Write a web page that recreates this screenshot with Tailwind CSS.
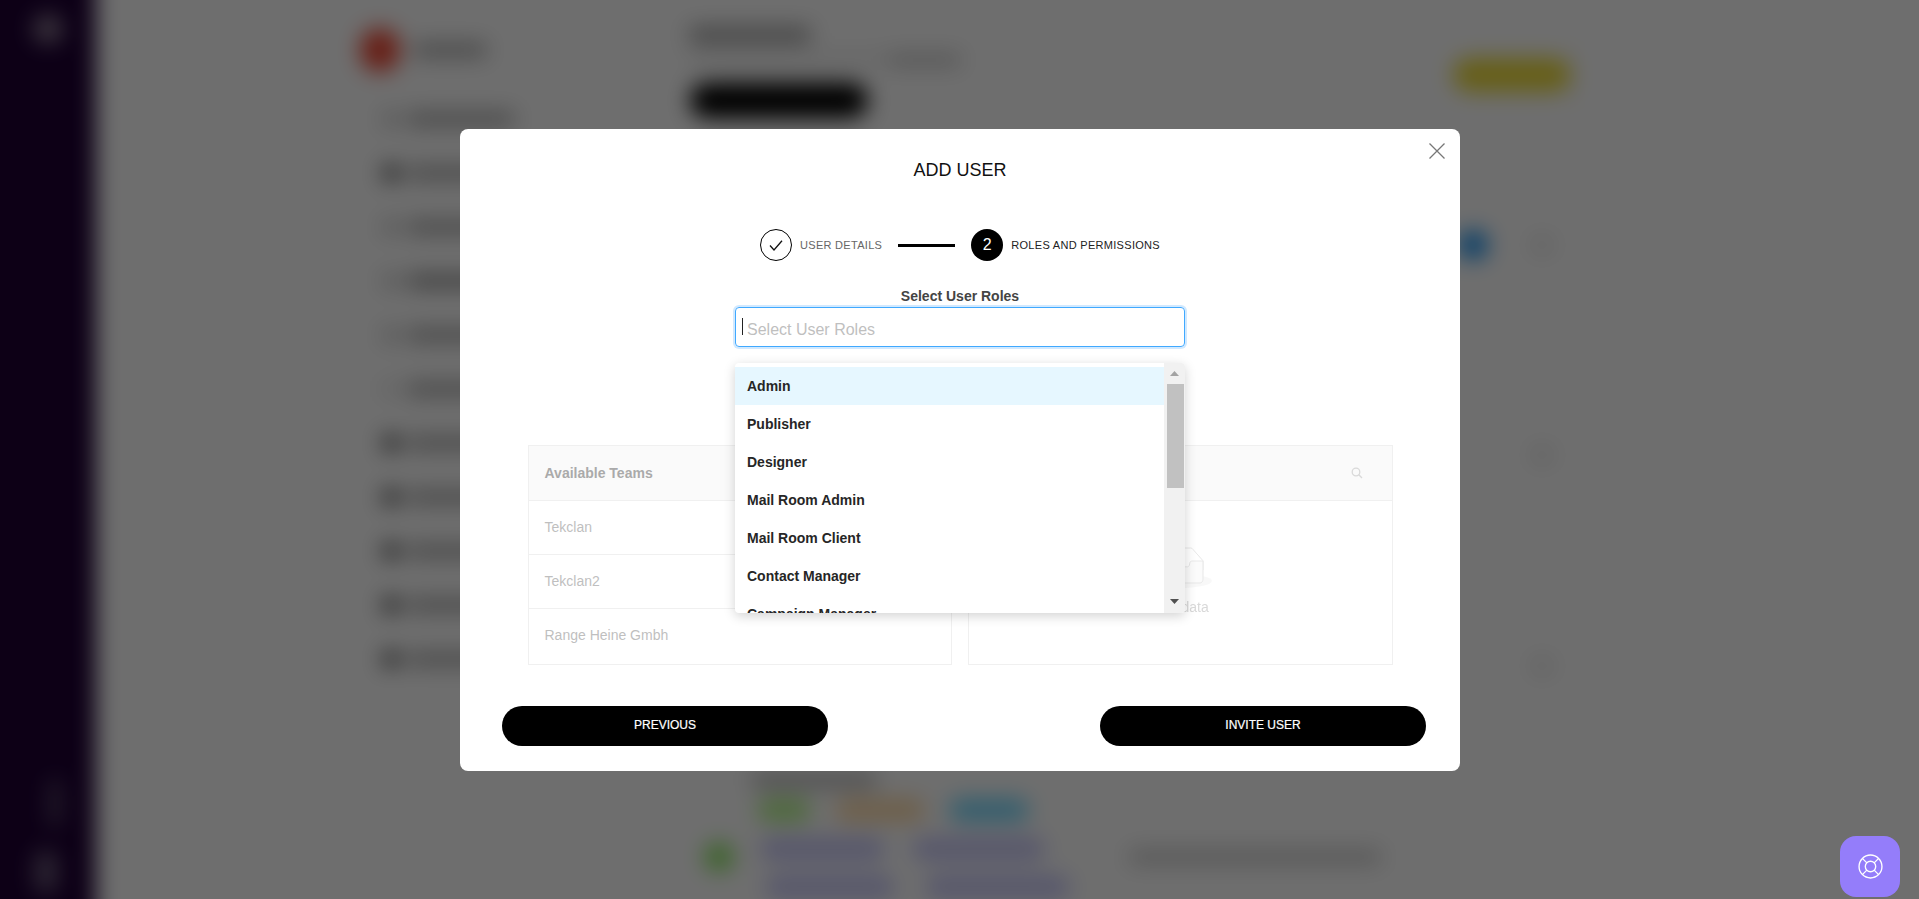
<!DOCTYPE html>
<html lang="en">
<head>
  <meta charset="UTF-8">
  <meta name="viewport" content="width=device-width, initial-scale=1.0">
  <title>Add User</title>
  <script src="https://cdn.jsdelivr.net/npm/@tailwindcss/browser@4"></script>
</head>
<body class="bg-white overflow-hidden h-[899px] font-['Liberation_Sans',Arial,sans-serif]">

  <!-- Page behind the modal, blurred. Runs 40px past the window so the blur has no pale edge -->
  <div class="fixed -left-[40px] -top-[40px] w-[2000px] h-[980px] pt-[40px] pl-[40px] bg-white blur-[11px] flex" aria-hidden="true">
    <aside class="w-[136px] -ml-[40px] -mt-[40px] pl-[40px] h-[980px] shrink-0 bg-[#1e0034] flex flex-col items-center justify-between pt-[54px] pb-[48px]">
      <div class="w-[30px] h-[30px] rounded-full bg-[#8a7a90]"></div>
      <div class="flex flex-col gap-[26px]">
        <div class="w-[12px] h-[46px] bg-[#5a4a68] ml-[14px]"></div>
        <div class="w-[22px] h-[40px] bg-[#6a5a78]"></div>
      </div>
    </aside>

    <!-- Left nav -->
    <div class="w-[594px] shrink-0 pl-[264px] pt-[28px]">
      <div class="flex items-center gap-[14px] h-[44px]">
        <div class="w-[40px] h-[44px] rounded-full bg-[#f04a36]"></div>
        <div class="w-[72px] h-[14px] bg-[#a8a8a8]"></div>
      </div>
      <div class="flex flex-col pt-[20px] pl-[24px]">
        <div class="h-[54px] flex items-center gap-[10px]"><span class="w-[14px] h-[14px] bg-[#bbb]"></span><span class="w-[106px] h-[14px] bg-[#a8a8a8]"></span></div>
        <div class="h-[54px] flex items-center gap-[10px]"><span class="w-[14px] h-[14px] bg-[#222]"></span><span class="w-[106px] h-[14px] bg-[#a8a8a8]"></span></div>
        <div class="h-[54px] flex items-center gap-[10px]"><span class="w-[14px] h-[14px] bg-[#bbb]"></span><span class="w-[106px] h-[14px] bg-[#a8a8a8]"></span></div>
        <div class="h-[54px] flex items-center gap-[10px]"><span class="w-[14px] h-[14px] bg-[#bbb]"></span><span class="w-[106px] h-[14px] bg-[#949494]"></span></div>
        <div class="h-[54px] flex items-center gap-[10px]"><span class="w-[14px] h-[14px] bg-[#bbb]"></span><span class="w-[106px] h-[14px] bg-[#a8a8a8]"></span></div>
        <div class="h-[54px] flex items-center gap-[10px]"><span class="w-[14px] h-[14px] bg-[#ddd]"></span><span class="w-[106px] h-[14px] bg-[#a8a8a8]"></span></div>
        <div class="h-[54px] flex items-center gap-[10px]"><span class="w-[14px] h-[14px] bg-[#222]"></span><span class="w-[106px] h-[14px] bg-[#a8a8a8]"></span></div>
        <div class="h-[54px] flex items-center gap-[10px]"><span class="w-[14px] h-[14px] bg-[#222]"></span><span class="w-[106px] h-[14px] bg-[#a8a8a8]"></span></div>
        <div class="h-[54px] flex items-center gap-[10px]"><span class="w-[14px] h-[14px] bg-[#222]"></span><span class="w-[106px] h-[14px] bg-[#a8a8a8]"></span></div>
        <div class="h-[54px] flex items-center gap-[10px]"><span class="w-[14px] h-[14px] bg-[#222]"></span><span class="w-[106px] h-[14px] bg-[#a8a8a8]"></span></div>
        <div class="h-[54px] flex items-center gap-[10px]"><span class="w-[14px] h-[14px] bg-[#222]"></span><span class="w-[106px] h-[14px] bg-[#a8a8a8]"></span></div>
      </div>
    </div>

    <!-- Main column -->
    <div class="w-[888px] shrink-0 pt-[27px] border-r border-[#eee]">
      <div class="flex justify-between h-[90px]">
        <div>
          <div class="w-[120px] h-[16px] bg-[#a0a0a0]"></div>
          <div class="flex mt-[12px]">
            <div class="w-[200px] h-[8px] bg-[#e4e4e4]"></div>
            <div class="w-[70px] h-[10px] bg-[#b8b8b8]"></div>
          </div>
          <div class="w-[178px] h-[35px] rounded-full bg-black mt-[18px]"></div>
        </div>
        <div class="w-[118px] h-[34px] rounded-full bg-[#eedc38] mt-[31px] mr-[6px]"></div>
      </div>

      <div class="flex justify-end items-center gap-[44px] mt-[113px] pr-[25px]">
        <div class="w-[30px] h-[30px] rounded-full bg-[#1490f0]"></div>
        <div class="w-[20px] h-[20px] rounded-full bg-[#e4e4e4]"></div>
      </div>
      <div class="flex justify-end mt-[185px] pr-[25px]">
        <div class="w-[20px] h-[20px] rounded-full bg-[#e4e4e4]"></div>
      </div>
      <div class="flex justify-end mt-[191px] pr-[25px]">
        <div class="w-[20px] h-[20px] rounded-full bg-[#e4e4e4]"></div>
      </div>

      <div class="w-[124px] h-[16px] bg-[#bcbcbc] ml-[62px] mt-[96px]"></div>
      <div class="flex gap-[24px] ml-[67px] mt-[10px]">
        <div class="w-[54px] h-[24px] rounded-full bg-[#b4f48c]"></div>
        <div class="w-[90px] h-[24px] rounded-full bg-[#ffdcaa]"></div>
        <div class="w-[80px] h-[24px] rounded-full bg-[#78daff]"></div>
      </div>
      <div class="flex items-start mt-[15px]">
        <div class="w-[30px] h-[30px] rounded-full bg-[#8ee864] ml-[14px] mr-[26px] mt-[5px] shrink-0"></div>
        <div class="flex flex-col gap-[14px] shrink-0">
          <div class="flex gap-[27px]">
            <div class="w-[125px] h-[24px] rounded-full bg-[#c8c8fa]"></div>
            <div class="w-[133px] h-[24px] rounded-full bg-[#c8c8fa]"></div>
          </div>
          <div class="flex gap-[30px] ml-[5px]">
            <div class="w-[130px] h-[24px] rounded-full bg-[#c8c8fa]"></div>
            <div class="w-[145px] h-[24px] rounded-full bg-[#c8c8fa]"></div>
          </div>
        </div>
        <div class="w-[250px] h-[14px] bg-[#c8c8c8] ml-[60px] mt-[13px] shrink-0"></div>
      </div>
    </div>
  </div>

  <!-- Backdrop and modal -->
  <div class="fixed inset-0 bg-[rgba(0,0,0,0.57)] pl-[460px] pt-[129px]">
    <div class="relative w-[1000px] h-[642px] bg-white rounded-[8px]">
      <button class="absolute right-[15px] top-[14px] text-[#777]">
        <svg width="16" height="16" viewBox="0 0 16 16" fill="none" stroke="currentColor" stroke-width="1.3"><path d="M0.5 0.5 15.5 15.5M15.5 0.5 0.5 15.5"/></svg>
      </button>

      <h2 class="pt-[27px] text-[18px] leading-[28px] text-center text-[#111]">ADD USER</h2>

      <!-- Stepper -->
      <div class="flex items-center justify-center mt-[45px] h-[32px]">
        <div class="flex items-center justify-center w-[32px] h-[32px] rounded-full border border-black">
          <svg width="14" height="11" viewBox="0 0 14 11" fill="none" stroke="#111" stroke-width="1.3"><path d="M1 5.5 5 10 13 0.8"/></svg>
        </div>
        <span class="ml-[8px] text-[11px] tracking-[0.3px] text-[#666]">USER DETAILS</span>
        <div class="mx-[16px] w-[57px] h-[3px] bg-black"></div>
        <div class="flex items-center justify-center w-[32px] h-[32px] rounded-full bg-black text-white text-[16px]">2</div>
        <span class="ml-[8px] text-[11px] tracking-[0.3px] text-[#222]">ROLES AND PERMISSIONS</span>
      </div>

      <!-- Role select -->
      <p class="mt-[25px] text-[14px] leading-[20px] font-bold text-center text-[#444]">Select User Roles</p>
      <div class="relative mt-[1px] ml-[275px] w-[450px] h-[40px] rounded-[4px] border border-[#40a9ff] shadow-[0_0_0_2px_rgba(24,144,255,0.2)] flex items-center pl-[11px] pt-[5px]">
        <span class="absolute left-[6px] top-[10px] w-[1px] h-[17px] bg-[#222]"></span>
        <span class="text-[16px] text-[#bfbfbf]">Select User Roles</span>
      </div>

      <!-- Transfer -->
      <div class="grid grid-cols-2 gap-[16px] w-[865px] ml-[67.5px] mt-[98px] h-[220px]">
        <div class="border border-[#f0f0f0] flex flex-col">
          <div class="h-[55px] shrink-0 bg-[#fafafa] border-b border-[#f0f0f0] flex items-center px-[16px] text-[14px] font-bold text-[#aaa]">Available Teams</div>
          <div class="h-[54px] shrink-0 border-b border-[#f0f0f0] flex items-center px-[16px] text-[14px] text-[#bfbfbf]">Tekclan</div>
          <div class="h-[54px] shrink-0 border-b border-[#f0f0f0] flex items-center px-[16px] text-[14px] text-[#bfbfbf]">Tekclan2</div>
          <div class="flex-1 flex items-center px-[16px] pb-[2px] text-[14px] text-[#bfbfbf]">Range Heine Gmbh</div>
        </div>
        <div class="border border-[#f0f0f0] flex flex-col">
          <div class="h-[55px] shrink-0 bg-[#fafafa] border-b border-[#f0f0f0] flex items-center justify-end pr-[29px]">
            <svg width="12" height="12" viewBox="0 0 12 12" fill="none" stroke="#d9d9d9" stroke-width="1.3"><circle cx="5" cy="5" r="3.8"/><path d="M7.8 7.8 11 11"/></svg>
          </div>
          <div class="flex-1 flex flex-col items-center pt-[46px] opacity-60">
            <svg width="64" height="41" viewBox="0 0 64 41">
              <g transform="translate(0 1)" fill="none" fill-rule="evenodd">
                <ellipse fill="#f5f5f5" cx="32" cy="33" rx="32" ry="7"/>
                <g fill-rule="nonzero" stroke="#d9d9d9">
                  <path d="M55 12.76L44.854 1.258C44.367.474 43.656 0 42.907 0H21.093c-.749 0-1.46.474-1.947 1.257L9 12.761V22h46v-9.24z"/>
                  <path d="M41.613 15.931c0-1.605.994-2.93 2.227-2.931H55v18.137C55 33.26 53.68 35 52.05 35h-40.1C10.32 35 9 33.259 9 31.137V13h11.16c1.233 0 2.227 1.323 2.227 2.928v.022c0 1.605 1.005 2.901 2.237 2.901h14.752c1.232 0 2.237-1.308 2.237-2.913v-.007z" fill="#fafafa"/>
                </g>
              </g>
            </svg>
            <span class="mt-[9px] pl-[8px] text-[14px] text-[#bfbfbf]">No data</span>
          </div>
        </div>
      </div>

      <!-- Actions -->
      <div class="flex justify-between pl-[42px] pr-[34px] mt-[41px]">
        <button class="w-[326px] h-[40px] rounded-full bg-black text-white text-[12px] [-webkit-text-stroke:0.2px_white] pb-[2px]">PREVIOUS</button>
        <button class="w-[326px] h-[40px] rounded-full bg-black text-white text-[12px] [-webkit-text-stroke:0.2px_white] pb-[2px]">INVITE USER</button>
      </div>

      <!-- Dropdown list, opened over the transfer -->
      <div class="absolute left-[275px] top-[234px] w-[450px] h-[250px] rounded-[4px] bg-white shadow-[0_3px_12px_rgba(0,0,0,0.18)] overflow-hidden flex">
        <ul class="flex-1 pt-[4px] text-[14px] font-bold text-[#262626] overflow-hidden">
          <li class="h-[38px] flex items-center pl-[12px] bg-[#e6f7ff]">Admin</li>
          <li class="h-[38px] flex items-center pl-[12px]">Publisher</li>
          <li class="h-[38px] flex items-center pl-[12px]">Designer</li>
          <li class="h-[38px] flex items-center pl-[12px]">Mail Room Admin</li>
          <li class="h-[38px] flex items-center pl-[12px]">Mail Room Client</li>
          <li class="h-[38px] flex items-center pl-[12px]">Contact Manager</li>
          <li class="h-[38px] flex items-center pl-[12px]">Campaign Manager</li>
        </ul>
        <div class="w-[21px] shrink-0 bg-[#f1f1f1] flex flex-col items-center">
          <svg class="mt-[8px]" width="9" height="5" viewBox="0 0 9 5" fill="#a3a3a3"><path d="M4.5 0 9 5H0z"/></svg>
          <div class="w-[17px] h-[104px] bg-[#c1c1c1] mt-[8px] ml-[1px]"></div>
          <svg class="mt-auto mb-[9px]" width="9" height="5" viewBox="0 0 9 5" fill="#505050"><path d="M0 0H9L4.5 5z"/></svg>
        </div>
      </div>
    </div>
  </div>

  <!-- Help launcher -->
  <button class="fixed left-[1840px] top-[836px] w-[60px] h-[61px] rounded-[16px] bg-[#947dfa] flex items-center justify-center text-white">
    <svg width="25" height="25" viewBox="0 0 24 24" fill="none" stroke="currentColor" stroke-width="1.3"><circle cx="12" cy="12" r="11"/><circle cx="12" cy="12" r="5"/><path d="M4.2 4.2 8.5 8.5M15.5 8.5 19.8 4.2M15.5 15.5 19.8 19.8M8.5 15.5 4.2 19.8"/></svg>
  </button>
</body>
</html>
